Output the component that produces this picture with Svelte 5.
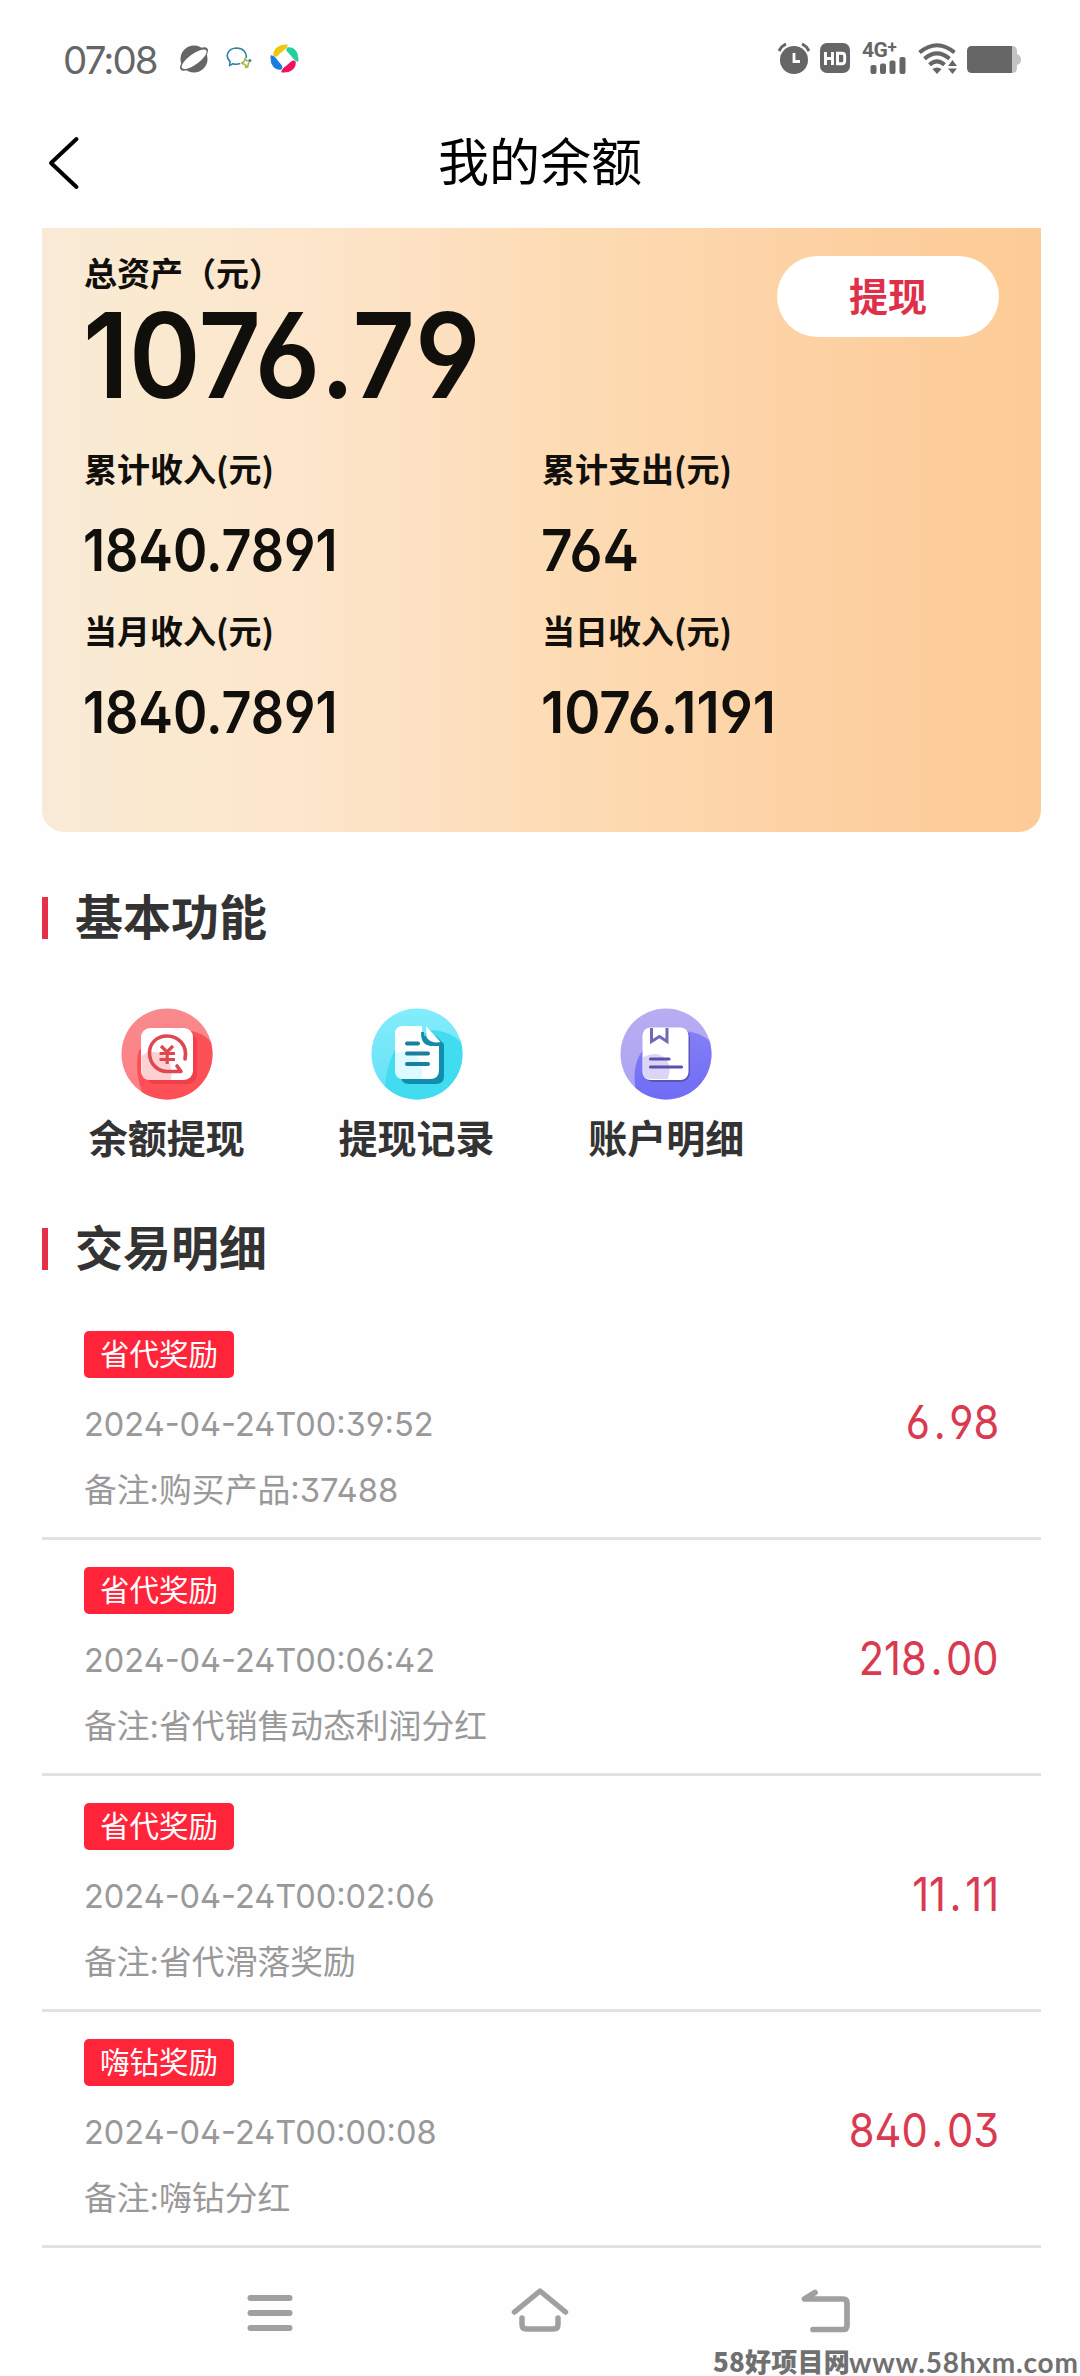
<script>
  const stats = [
    { label: '累计收入(元)', value: '1840.7891' },
    { label: '累计支出(元)', value: '764' },
    { label: '当月收入(元)', value: '1840.7891' },
    { label: '当日收入(元)', value: '1076.1191' }
  ];
  const records = [
    { tag: '省代奖励', time: '2024-04-24T00:39:52', note: '备注:购买产品:37488', amount: '6.98' },
    { tag: '省代奖励', time: '2024-04-24T00:06:42', note: '备注:省代销售动态利润分红', amount: '218.00' },
    { tag: '省代奖励', time: '2024-04-24T00:02:06', note: '备注:省代滑落奖励', amount: '11.11' },
    { tag: '嗨钻奖励', time: '2024-04-24T00:00:08', note: '备注:嗨钻分红', amount: '840.03' }
  ];
</script>

<div class="screen">
  <div class="status">
    <span class="clock">07:08</span>
    <svg class="planet" width="30" height="28" viewBox="0 0 30 28">
      <circle cx="15" cy="14" r="13.5" fill="#666" />
      <ellipse cx="15" cy="14" rx="17" ry="6.6" transform="rotate(-38 15 14)" fill="#666" />
      <ellipse cx="15" cy="14.3" rx="15" ry="5.2" transform="rotate(-36 15 14)" fill="#fff" />
    </svg>
    <svg class="bubble" width="26" height="22" viewBox="0 0 26 22" fill="none" stroke-width="1.6" stroke-linejoin="round">
      <path d="M14 16.6 C10 18 8 17 7 16.6 L3.6 18.6 L4 14.6 C-1.500 9 2 1.200 10.500 1 C17 1 21 5.500 20.200 11" stroke="#2f7fa8" />
      <path d="M19 11.500 l1.800 2.300 3.600-.6 -1.800 3 -1 4 -2.600-2.600 -3.600-1.400 2.800-1.700z" stroke="#a9b85a" />
      <circle cx="24" cy="13.600" r="1.400" fill="#2f7fa8" /><circle cx="20" cy="20" r="1.300" fill="#d0a53a" />
    </svg>
    <svg class="wheel" width="29" height="29" viewBox="0 0 29 29" stroke-width="1.400" stroke-linejoin="round">
      <path d="M4 11 C4 5 9 .8 17 1.300 C16 5 11 7 7.500 11 C6.500 12.500 4.500 12.500 4 11Z" fill="#f0c60d" stroke="#f0c60d" />
      <path d="M18 4 C24 3.500 28.500 8.500 27.700 17 C24 16 22 11 18.300 7.800 C16.800 6.600 16.600 4.600 18 4Z" fill="#25d0a0" stroke="#25d0a0" />
      <path d="M25 18 C25.500 24 20.500 28.500 12 27.700 C12.500 24 18 22 21.300 18.300 C22.300 17 24.500 16.600 25 18Z" fill="#f3105f" stroke="#f3105f" />
      <path d="M10.500 25 C5 25.500 .5 20.500 1.300 12 C5 12.500 7.500 18 10.600 21 C12 22.300 12 24.500 10.500 25Z" fill="#1b7ce0" stroke="#1b7ce0" />
    </svg>
    <div class="indicators">
      <svg width="32" height="31" viewBox="0 0 32 31" fill="#666">
        <circle cx="16" cy="17" r="14" />
        <path d="M1 8 Q3.500 3 8 1 M31 8 Q28.500 3 24 1" fill="none" stroke="#666" stroke-width="3" />
        <path d="M16 10 V18.500 H22" fill="none" stroke="#fff" stroke-width="2.800" />
      </svg>
      <svg class="hd" width="30" height="30" viewBox="0 0 30 30">
        <rect width="30" height="30" rx="7" fill="#666" />
        <path d="M5.500 9 V22 M12.500 9 V22 M5.500 15.500 H12.500 M17.500 10.300 H22 Q24.700 10.300 24.700 13 V18 Q24.700 20.700 22 20.700 H17.500Z" fill="none" stroke="#fff" stroke-width="2.900" />
      </svg>
      <div class="cell">
        <span>4G<i>+</i></span>
        <svg width="45" height="31" viewBox="0 0 45 31" fill="#666">
          <rect x="8.500" y="22" width="6" height="9" rx="2" /><rect x="18" y="20.500" width="6" height="10.500" rx="2" />
          <rect x="27.500" y="17.500" width="6" height="13.500" rx="2" /><rect x="37.500" y="14" width="6" height="17" rx="2" />
        </svg>
      </div>
      <svg class="wifi" width="40" height="31" viewBox="0 0 40 31" fill="none" stroke="#666" stroke-width="4">
        <path d="M1.500 9.500 Q19 -5 36.500 9.500" /><path d="M6.500 15.800 Q19 5 31.500 15.800" /><path d="M11.500 21.800 Q19 15 26.500 21.800" />
        <path d="M14.500 26 Q19 23 23.500 26 L19 31Z M30 23 L34.500 17 39 23Z M30 25.500 H39 L34.500 31Z" fill="#666" stroke="none" />
      </svg>
      <svg class="battery" width="54" height="27" viewBox="0 0 54 27">
        <path d="M40 0 H45 Q50 0 50 5 V8 Q54 9 54 13.500 Q54 18 50 19 V22 Q50 27 45 27 H40Z" fill="#c2c2c2" />
        <path d="M5 0 H45 V27 H5 Q0 27 0 22 V5 Q0 0 5 0Z" fill="#666" />
      </svg>
    </div>
  </div>

  <header>
    <svg width="32" height="54" viewBox="0 0 32 54" fill="none" stroke="#000" stroke-width="4" stroke-linecap="round" stroke-linejoin="round">
      <path d="M28.500 3 L3 27 L28.500 51" />
    </svg>
    <h1>我的余额</h1>
  </header>

  <main>
    <section class="card">
      <div class="top">
        <div>
          <div class="label first">总资产（元）</div>
          <div class="total"><span>1076.79</span></div>
        </div>
        <button>提现</button>
      </div>
      <div class="stats">
        {#each stats as s}
          <div class="stat">
            <div class="label">{s.label}</div>
            <div class="value"><span>{s.value}</span></div>
          </div>
        {/each}
      </div>
    </section>

    <h2 class="h-basic"><i></i><span>基本功能</span></h2>
    <nav class="features">
      <div class="feature">
        <svg width="92" height="92" viewBox="0 0 92 92">
          <defs>
            <clipPath id="disc"><circle cx="46" cy="46" r="45.500" /></clipPath>
            <linearGradient id="red" x1="0" y1="0" x2="0" y2="1"><stop offset="0" stop-color="#f98a8c" /><stop offset="1" stop-color="#fd7f84" /></linearGradient>
            <linearGradient id="redDeep" x1="0" y1="0" x2="0" y2="1"><stop offset="0" stop-color="#fa5157" /><stop offset="1" stop-color="#fe4f56" /></linearGradient>
          </defs>
          <g clip-path="url(#disc)">
            <rect width="92" height="92" fill="url(#red)" />
            <path d="M66 22 Q82 24 92 36 V92 H24 Q12 64 18 42Z" fill="url(#redDeep)" />
          </g>
          <rect x="25" y="25" width="51" height="51" rx="9" fill="#f03f48" />
          <rect x="20" y="20" width="52" height="52" rx="9" fill="#fff" />
          <path d="M20.500 48 Q31 39 45 49 Q52 58 50 72 H29 Q20.500 72 20.500 63Z" fill="#fdd0d1" />
          <path d="M64 51 C67 37 57 28 46 28 C35 28 28.500 36 28.500 45 C28.500 56 37 63.500 46 63.500 H60 L56 58" fill="none" stroke="#df4850" stroke-width="3.600" stroke-linejoin="round" stroke-linecap="round" />
          <path d="M40 38 L46 44 L52 38 M38.500 45.500 H54 M38.500 51.500 H54 M46.200 44 V56" fill="none" stroke="#df4850" stroke-width="3.200" />
        </svg>
        <span>余额提现</span>
      </div>
      <div class="feature">
        <svg width="92" height="92" viewBox="0 0 92 92">
          <defs>
            <linearGradient id="cyan" x1="0" y1="0" x2="0" y2="1"><stop offset="0" stop-color="#83edfb" /><stop offset="1" stop-color="#63dff5" /></linearGradient>
          </defs>
          <g clip-path="url(#disc)">
            <rect width="92" height="92" fill="url(#cyan)" />
            <path d="M60 22 Q80 23 92 36 V92 H14 Q13 62 24 42Z" fill="#42dcf0" />
          </g>
          <path d="M30 28 H65 L73 36 V68 Q73 76 65 76 H38 Q30 76 30 68Z" fill="#138daf" />
          <path d="M32 18 H51 V28 Q51 37 60 37 H68 V62 Q68 71 59 71 H33 Q24 71 24 62 V26 Q24 18 32 18Z" fill="#fff" />
          <path d="M24 46 Q36 39 47 50 Q54 59 50 71 H33 Q24 71 24 62Z" fill="#dcfaff" />
          <path d="M55 18 L69.500 34 Q59 36 55.500 29Z" fill="#fff" />
          <path d="M51.500 24 Q51 35.500 60 36.500 H69" fill="none" stroke="#168ba8" stroke-width="2.800" />
          <path d="M36 35.500 H47 M36 45.500 H57 M36 56 H57" stroke="#187f9c" stroke-width="4" stroke-linecap="round" />
        </svg>
        <span>提现记录</span>
      </div>
      <div class="feature">
        <svg width="92" height="92" viewBox="0 0 92 92">
          <defs>
            <linearGradient id="violet" x1="0" y1="0" x2="0" y2="1"><stop offset="0" stop-color="#b9adf3" /><stop offset="1" stop-color="#aaa4f2" /></linearGradient>
            <linearGradient id="violetDeep" x1="0" y1="0" x2="0" y2="1"><stop offset="0" stop-color="#827ff5" /><stop offset="1" stop-color="#706cf7" /></linearGradient>
          </defs>
          <g clip-path="url(#disc)">
            <rect width="92" height="92" fill="url(#violet)" />
            <path d="M62 23 Q80 23 92 35 V92 H18 Q9 60 23 42Z" fill="url(#violetDeep)" />
          </g>
          <rect x="24" y="21" width="46" height="53" rx="9" fill="#5d54b8" />
          <rect x="22.500" y="19.500" width="46" height="52.500" rx="8" fill="#fff" />
          <path d="M23 49 Q37 42 46 51 Q52 58 48 71 H31 Q23 71 23 63Z" fill="#dcd6f6" />
          <path d="M31.500 20 V33.500 L39.500 28.500 L47 33.500 V20" fill="none" stroke="#7069b8" stroke-width="3" />
          <path d="M30.500 51 H49 M30.500 59 H61.500" stroke="#5b51ab" stroke-width="3.200" stroke-linecap="round" />
        </svg>
        <span>账户明细</span>
      </div>
    </nav>

    <h2 class="h-detail"><i></i><span>交易明细</span></h2>
    <ul>
      {#each records as r}
        {@const parts = r.amount.split('.')}
        <li>
          <div class="info">
            <span class="tag">{r.tag}</span>
            <span class="time">{r.time}</span>
            <span class="note">{r.note}</span>
          </div>
          <span class="amount">{parts[0]}<span class="dot">.</span>{parts[1]}</span>
        </li>
      {/each}
    </ul>
  </main>

  <footer>
    <svg width="46" height="38" viewBox="0 0 46 38" stroke="#a0a0a0" stroke-width="6" stroke-linecap="round"><path d="M3.500 4 H42.500 M3.500 19 H42.500 M3.500 34 H42.500" /></svg>
    <svg class="home" width="58" height="46" viewBox="0 0 58 46" fill="none" stroke="#a0a0a0" stroke-width="5.500" stroke-linecap="round" stroke-linejoin="round"><path d="M3.500 25 L29 4 L54.500 25 M11 31 V37.500 Q11 42 15.500 42 H42.500 Q47 42 47 37.500 V31" /></svg>
    <svg width="49" height="44" viewBox="0 0 49 44" fill="none" stroke="#a0a0a0" stroke-width="5.700" stroke-linecap="round" stroke-linejoin="round"><path d="M14 3.500 L3.500 10 H42 Q46 10 46 14 V36.500 Q46 40.500 42 40.500 H12" /></svg>
  </footer>
  <div class="watermark"><b>58好项目网</b><span>www.58hxm.com</span></div>
</div>

<style>
  :global(body) { background: #fefefe; }
  .screen {
    position: relative;
    width: 1080px;
    height: 2376px;
    overflow: hidden;
    background: #fefefe;
    display: flex;
    flex-direction: column;
    font-family: Inter, 'Noto Sans CJK SC', sans-serif;
    font-feature-settings: 'ss01';
    color: #333;
  }
  h1, h2, ul { margin: 0; padding: 0; list-style: none; }
  svg { display: block; flex: none; }
  .status { height: 120px; box-sizing: border-box; padding: 0 59px 0 63px; display: flex; align-items: center; }
  .clock { font-size: 38.5px; color: #666; width: 116px; letter-spacing: -1.9px; white-space: nowrap; }
  .planet { margin: -2px 17px 0 0; }
  .bubble { margin: -4px 18px 0 0; }
  .wheel { margin-top: -3px; }
  .indicators { margin-left: auto; display: flex; align-items: center; margin-top: -4px; }
  .hd { margin-left: 10px; }
  .cell { position: relative; margin-left: 12px; width: 45px; height: 31px; }
  .cell span { position: absolute; left: 0; top: -3px; font: 700 21px/20px Roboto, sans-serif; letter-spacing: -.5px; color: #666; white-space: nowrap; }
  .cell i { font-style: normal; font-size: 17px; vertical-align: 4px; line-height: 1px; }
  .wifi { margin-left: 11px; }
  .battery { margin-left: 9px; margin-top: 3px; }
  header { height: 108px; display: grid; grid-template-columns: 80px 1fr 80px; align-items: center; }
  header svg { margin: -23px 0 0 48px; }
  h1 { text-align: center; font: 400 51px/60px 'Noto Sans CJK SC', sans-serif; color: #000; margin-top: -30px; }
  main { padding: 0 39px 0 42px; }
  .card {
    height: 604px;
    box-sizing: border-box;
    padding: 28px 42px 0 43px;
    border-radius: 0 0 22px 22px;
    background: linear-gradient(90deg, #f9ead8 0%, #faead0 10%, #fce6cc 25%, #fde0c0 40%, #fddcb4 52%, #fdd5aa 68%, #fdcf9f 84%, #fdcb95 100%);
    color: #110f0c;
  }
  .top { display: flex; justify-content: space-between; height: 194px; }
  .label { font-size: 33px; line-height: 40px; font-weight: 700; font-family: 'Noto Sans CJK SC', sans-serif; margin-left: -1px; }
  .stats .label { margin-top: -2px; }
  .label.first { margin-top: -4px; }
  .total { font-size: 118px; line-height: 126px; font-weight: 600; margin-left: -2px; }
  .total span { display: inline-block; transform: scaleX(.92); transform-origin: 0 50%; }
  .value span { display: inline-block; transform: scaleX(.898); transform-origin: 0 50%; }
  .stat:nth-child(even) .value span { transform: scaleX(.945); }
  button { width: 222px; height: 81px; padding: 0 0 4px; border: 0; border-radius: 41px; background: #fff; color: #e02f48; font: 700 39px/77px 'Noto Sans CJK SC', sans-serif; }
  .stats { display: grid; grid-template-columns: 458px 456px; }
  .stat { height: 162px; }
  .value { font-size: 58px; line-height: 80px; font-weight: 600; margin: 22px 0 0 -2px; }
  h2 { display: flex; align-items: center; height: 60px; font: 700 48px/60px 'Noto Sans CJK SC', sans-serif; }
  h2 i { width: 6px; height: 42px; background: #e72f49; margin-right: 27px; }
  h2 span { margin-top: -8px; }
  .h-basic { margin-top: 56px; }
  .features { display: grid; grid-template-columns: repeat(4, 249.750px); margin-top: 60px; }
  .feature { display: flex; flex-direction: column; align-items: center; gap: 7px; height: 211px; font: 700 39px/58px 'Noto Sans CJK SC', sans-serif; }
  ul { padding-top: 25px; }
  li { height: 236px; box-sizing: border-box; border-bottom: 3px solid #e1e1e1; padding: 27px 42px 0 42px; display: flex; justify-content: space-between; }
  .info { display: flex; flex-direction: column; align-items: flex-start; color: #999; font-size: 33px; }
  .tag { width: 150px; height: 47px; border-radius: 5px; background: #ff2439; color: #fff; text-align: center; font: 400 29.500px/42px 'Noto Sans CJK SC', sans-serif; }
  .time { margin-top: 26px; line-height: 40px; transform: scaleX(.985); transform-origin: 0 50%; }
  .note { margin-top: 26px; line-height: 40px; font-size: 32.8px; white-space: nowrap; }
  .amount { color: #d93a50; font-size: 46px; line-height: 60px; margin-top: 61px; transform: scaleX(.905); transform-origin: 100% 50%; }
  .dot { margin: 0 4px; }
  footer { position: absolute; left: 0; right: 0; top: 2287px; height: 48px; display: flex; padding-left: 247px; align-items: center; }
  .home { margin: -2px 232px 0 218px; }
  footer svg:first-child { margin-top: 4px; }
  .watermark { position: absolute; left: 713px; bottom: 1px; display: flex; width: 367px; height: 27px; color: #707070; white-space: nowrap; }
  .watermark b { width: 136px; font: 900 26px/26px 'Noto Sans CJK SC', sans-serif; letter-spacing: .2px; }
  .watermark span { font: 700 28px/28px Lato, sans-serif; letter-spacing: .8px; }
</style>
